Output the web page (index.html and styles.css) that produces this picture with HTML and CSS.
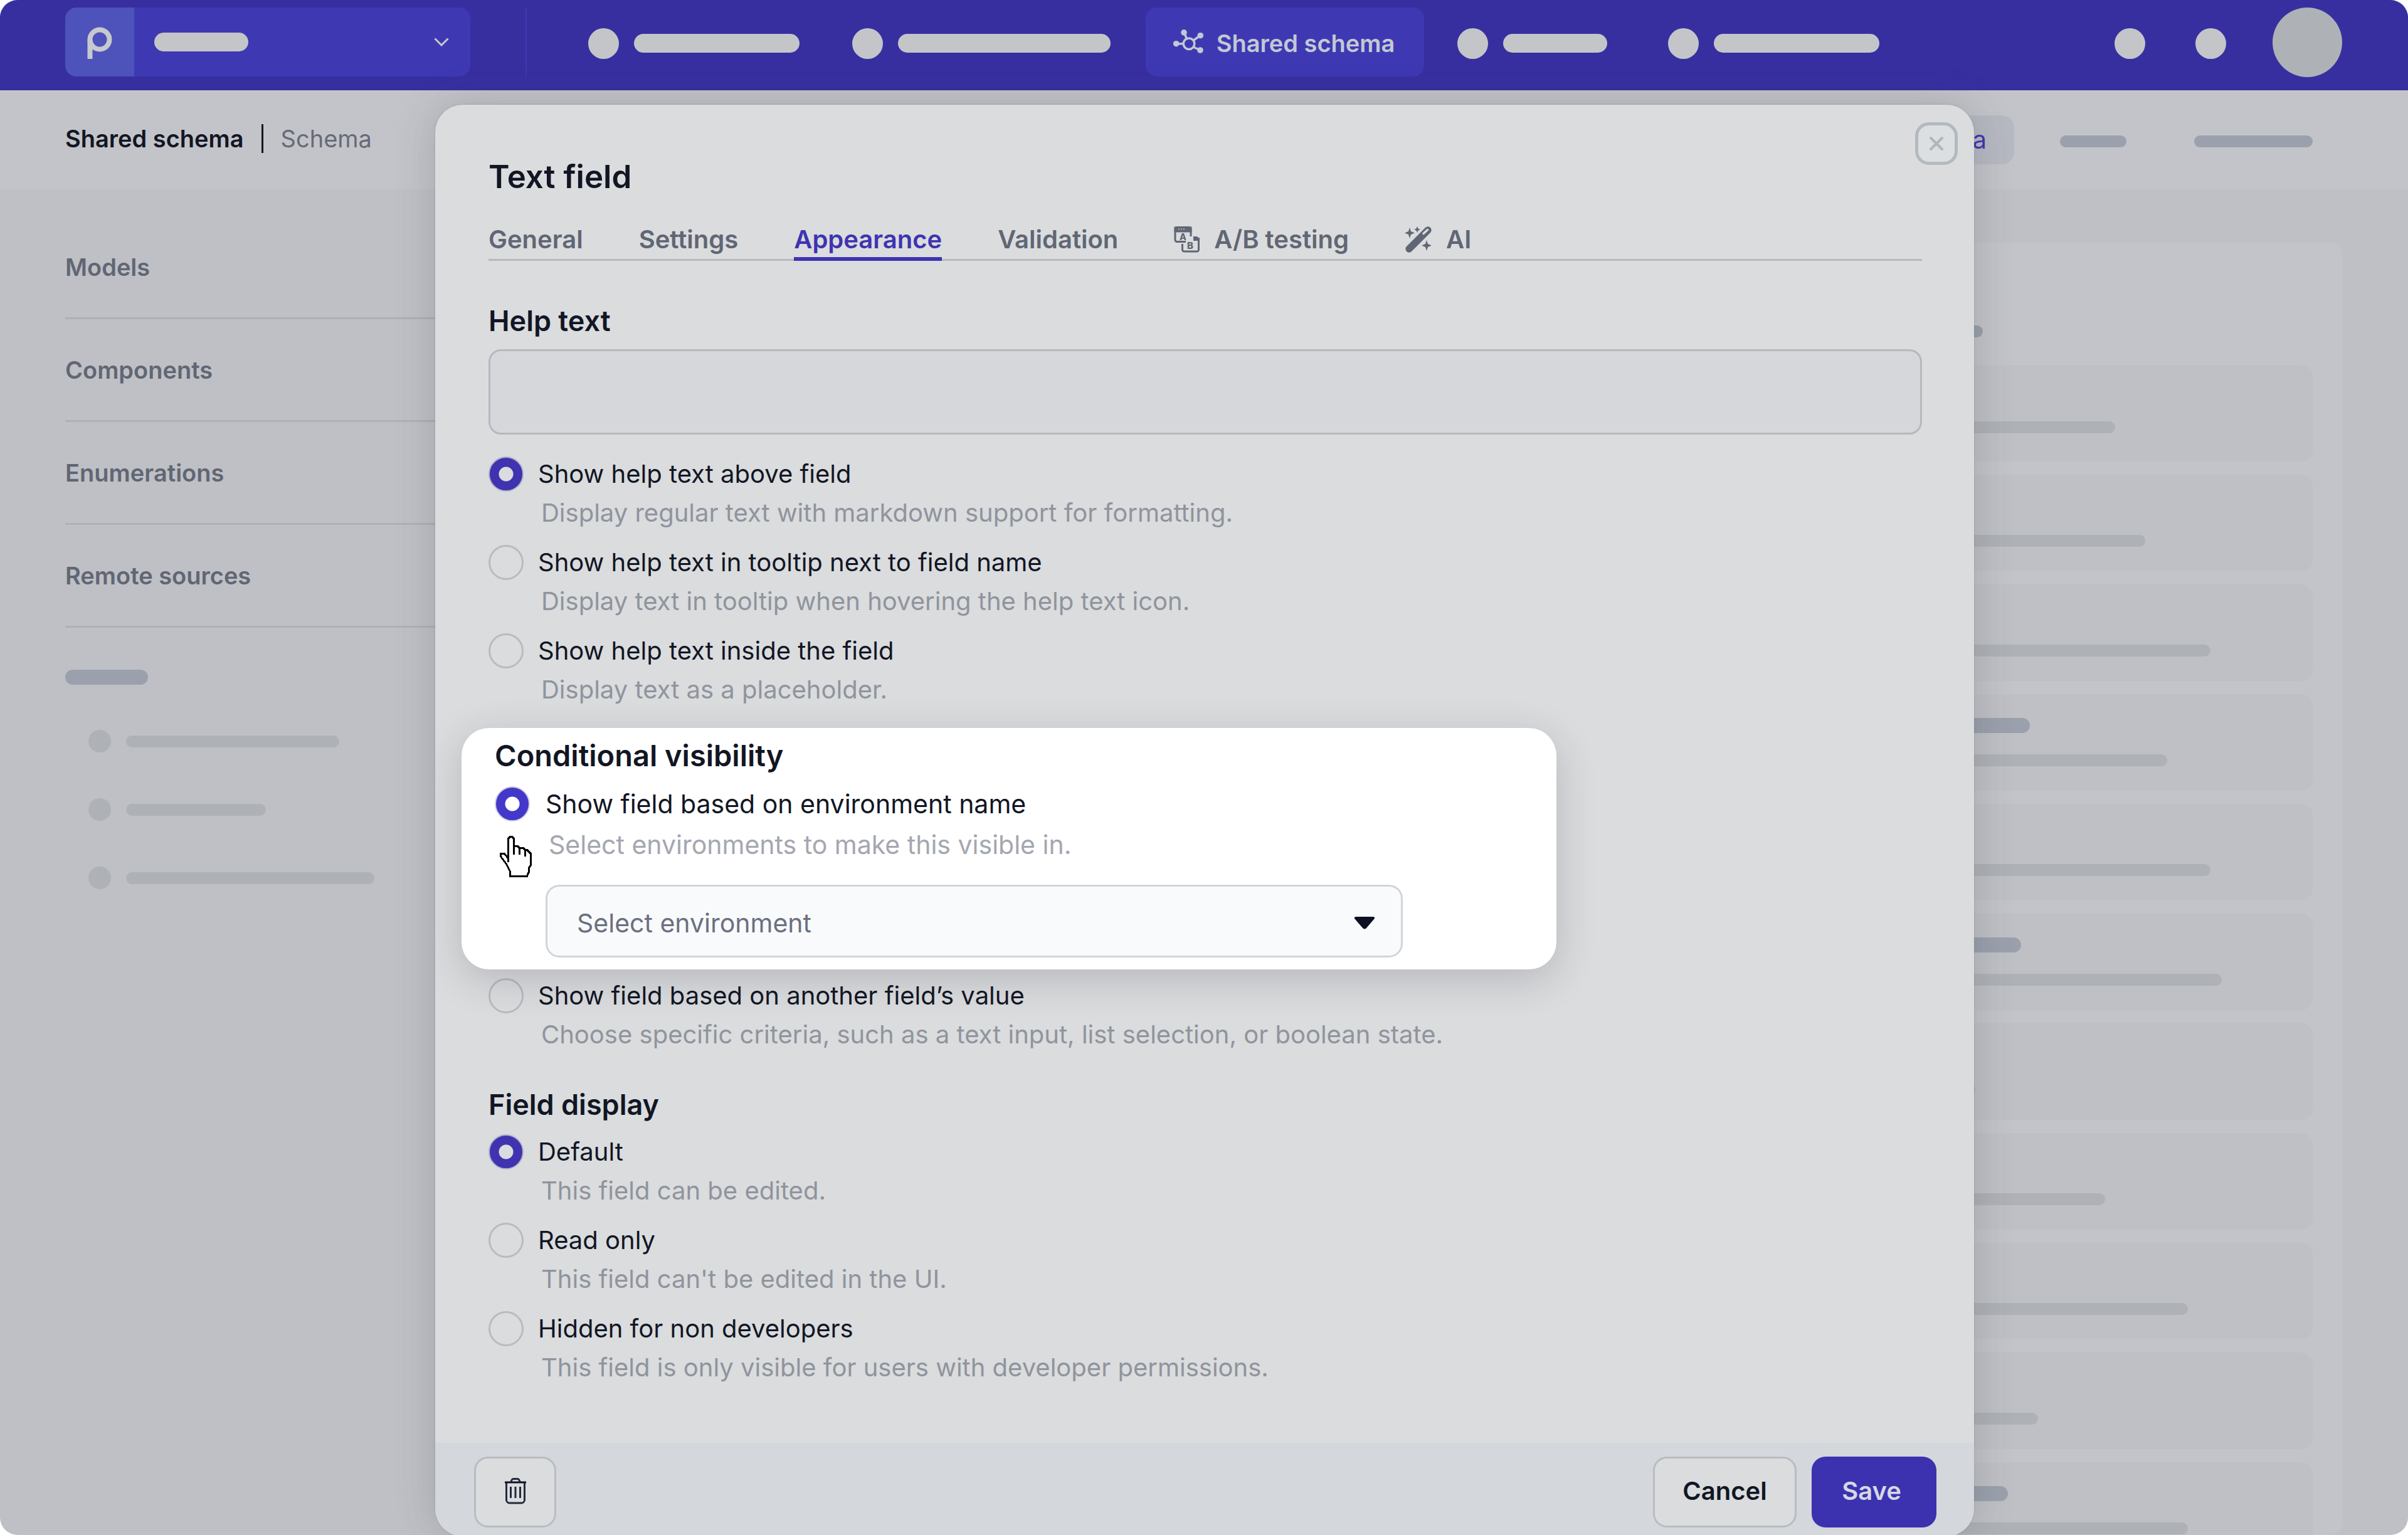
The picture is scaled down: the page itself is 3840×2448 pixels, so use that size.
FILE: index.html
```html
<!DOCTYPE html>
<html lang="en">
<head>
<meta charset="utf-8">
<title>Shared schema – Text field</title>
<link rel="stylesheet" href="styles.css">
</head>
<body>
<div class="app">
  <header class="topbar">
    <button class="switcher" type="button" aria-label="Switch project">
      <span class="switcher-logo">
        <svg width="40" height="52" viewBox="0 0 40 52" fill="none" stroke="#c6c9cd" stroke-width="8"><circle cx="20" cy="20" r="15.5"/><path d="M4.5 20V51"/></svg>
      </span>
      <span class="pill pill-light switcher-name"></span>
      <svg class="switcher-chevron" width="24" height="14" viewBox="0 0 24 14" fill="none" stroke="#c6c9cd" stroke-width="3"><path d="M1.500 1.500L12 12L22.500 1.500"/></svg>
    </button>
    <nav class="topnav" aria-label="Main">
      <span class="nav-stub"><i class="dot"></i><i class="pill pill-light" style="width:264px"></i></span>
      <span class="nav-stub"><i class="dot"></i><i class="pill pill-light" style="width:339px"></i></span>
      <a class="nav-active" href="#">
        <svg width="52" height="44" viewBox="0 0 52 44" fill="none" stroke="#c3c8d4" stroke-width="3.5"><circle cx="26" cy="22.700" r="8.800"/><path d="M6 22.700H17M18.500 5L22.500 15M33 17.500L44 9.700M33 28L44 33"/><g fill="#c3c8d4" stroke="none"><circle cx="5.700" cy="22.700" r="4.800"/><circle cx="18" cy="4.900" r="4.800"/><circle cx="44.300" cy="9.700" r="4.800"/><circle cx="44" cy="33" r="4.800"/></g></svg>
        <span>Shared schema</span>
      </a>
      <span class="nav-stub"><i class="dot"></i><i class="pill pill-light" style="width:166px"></i></span>
      <span class="nav-stub"><i class="dot"></i><i class="pill pill-light" style="width:264px"></i></span>
    </nav>
    <div class="topbar-end">
      <i class="dot"></i><i class="dot"></i><i class="avatar"></i>
    </div>
  </header>

  <div class="subbar">
    <div class="crumbs"><strong>Shared schema</strong><i class="crumb-rule"></i><span>Schema</span></div>
    <nav class="subnav" aria-label="Views">
      <a class="subnav-active" href="#">Schema</a>
      <i class="bar bar-dark" style="width:106px"></i>
      <i class="bar bar-dark" style="width:189px"></i>
    </nav>
  </div>

  <div class="workspace">
    <aside class="sidebar">
      <nav class="side-links" aria-label="Schema">
        <a href="#">Models</a>
        <a href="#">Components</a>
        <a href="#">Enumerations</a>
        <a href="#">Remote sources</a>
      </nav>
      <i class="bar bar-title side-title"></i>
      <ul class="side-list">
        <li><i class="side-dot"></i><i class="bar" style="width:340px"></i></li>
        <li><i class="side-dot"></i><i class="bar" style="width:223px"></i></li>
        <li><i class="side-dot"></i><i class="bar" style="width:396px"></i></li>
      </ul>
    </aside>
    <main class="panel">
      <i class="bar bar-dark panel-title"></i>
      <div class="cards">
        <div class="card"><i class="bar bar-title" style="width:1800px"></i><i class="bar" style="width:2485px"></i></div>
        <div class="card"><i class="bar bar-title" style="width:1900px"></i><i class="bar" style="width:2533px"></i></div>
        <div class="card"><i class="bar bar-title" style="width:1700px"></i><i class="bar" style="width:2637px"></i></div>
        <div class="card"><i class="bar bar-title" style="width:2349px"></i><i class="bar" style="width:2568px"></i></div>
        <div class="card"><i class="bar bar-title" style="width:1800px"></i><i class="bar" style="width:2637px"></i></div>
        <div class="card"><i class="bar bar-title" style="width:2335px"></i><i class="bar" style="width:2655px"></i></div>
        <div class="card"><i class="bar bar-title" style="width:1700px"></i><i class="bar" style="width:2262px"></i></div>
        <div class="card"><i class="bar bar-title" style="width:1900px"></i><i class="bar" style="width:2469px"></i></div>
        <div class="card"><i class="bar bar-title" style="width:1800px"></i><i class="bar" style="width:2601px"></i></div>
        <div class="card"><i class="bar bar-title" style="width:1700px"></i><i class="bar" style="width:2362px"></i></div>
        <div class="card"><i class="bar bar-title" style="width:2314px"></i><i class="bar" style="width:2601px"></i></div>
      </div>
    </main>
  </div>

  <div class="overlay">
    <form class="modal" role="dialog" aria-labelledby="dialog-title">
      <button class="close" type="button" aria-label="Close">
        <svg width="24" height="24" viewBox="0 0 24 24" fill="none" stroke="#b0b5bb" stroke-width="4" stroke-linecap="round"><path d="M3 3L21 21M21 3L3 21"/></svg>
      </button>
      <div class="modal-body">
        <section class="block">
          <h1 id="dialog-title">Text field</h1>
          <nav class="tabs" aria-label="Field settings">
            <a href="#">General</a>
            <a href="#">Settings</a>
            <a class="is-active" href="#" aria-current="page">Appearance</a>
            <a href="#">Validation</a>
            <a href="#">
              <svg width="42" height="42" viewBox="0 0 42 42" fill="none" stroke="#616674" stroke-width="3"><path d="M19 24.500H5A3 3 0 0 1 2 21.500V4.500A3 3 0 0 1 5 1.500H24A3 3 0 0 1 27 4.500V16"/><path d="M2 2H27V8H2Z" fill="#616674"/><path d="M7 4.500H17" stroke="#b4b7bd" stroke-width="2" stroke-dasharray="2 2"/><path d="M13.500 28V37A3 3 0 0 0 16.500 40H36.500A3 3 0 0 0 39.500 37V18"/><path d="M31 16H37L41 20V23H31Z" fill="#616674" stroke="none"/><g fill="#616674" stroke="none" font-family="Inter, sans-serif" font-weight="800"><text x="9" y="21.500" font-size="14">A</text><text x="21" y="35.500" font-size="15">B</text></g></svg>
              A/B testing
            </a>
            <a href="#">
              <svg width="44" height="42" viewBox="0 0 44 42" fill="#616674"><path d="M3 32L33 2A5.500 5.500 0 0 1 41 10L11 40A5.500 5.500 0 0 1 3 32Z"/><path d="M30 11.500L36.500 5.500" stroke="#dadcde" stroke-width="3.500" stroke-linecap="round"/><path d="M8 2L10 8L16 10.500L10 13L8 19L6 13L0 10.500L6 8ZM20 0L21.500 3.500L25 5L21.500 6.500L20 10L18.500 6.500L15 5L18.500 3.500ZM35 22L37 28L43 30.500L37 33L35 39L33 33L27 30.500L33 28Z"/></svg>
              AI
            </a>
          </nav>
        </section>

        <section class="block block-help">
          <h2><label for="help-text">Help text</label></h2>
          <input class="text-input" id="help-text" type="text">
          <div class="options">
            <div class="option">
              <input type="radio" name="help" id="help-above" checked>
              <label for="help-above">Show help text above field</label>
              <p>Display regular text with markdown support for formatting.</p>
            </div>
            <div class="option">
              <input type="radio" name="help" id="help-tip">
              <label for="help-tip">Show help text in tooltip next to field name</label>
              <p>Display text in tooltip when hovering the help text icon.</p>
            </div>
            <div class="option">
              <input type="radio" name="help" id="help-inside">
              <label for="help-inside">Show help text inside the field</label>
              <p>Display text as a placeholder.</p>
            </div>
          </div>
        </section>

        <section class="spotlight">
          <h2>Conditional visibility</h2>
          <div class="option">
            <input type="radio" name="visibility" id="vis-env" checked>
            <label for="vis-env">Show field based on environment name</label>
            <p>Select environments to make this visible in.</p>
            <div class="select-wrap">
              <select aria-label="Select environment"><option>Select environment</option></select>
              <svg width="34" height="20" viewBox="0 0 34 20" fill="#0c1020"><path d="M3 0H31Q35 1 32 4L20 18Q17 21 14 18L2 4Q-1 1 3 0Z"/></svg>
            </div>
          </div>
          <svg class="cursor" width="51" height="66" viewBox="0 0 17 22" fill="#fff" stroke="#000" shape-rendering="crispEdges"><path d="M5.500 .5H6.500L7.500 1.500V5.500H9.500L10.500 6.500H12.500L13.500 7.500H14.500L16.500 9.500V15.500L15.500 17V19L14.500 21.500H5.500V19L3.500 15L.5 11V9.500H2.500L4.500 12V1.500Z"/><path d="M7.500 5V10M10.500 6V10M13.500 7V11M4.500 10V14" fill="none"/></svg>
        </section>

        <section class="block block-visibility">
          <div class="option">
            <input type="radio" name="visibility" id="vis-field">
            <label for="vis-field">Show field based on another field’s value</label>
            <p>Choose specific criteria, such as a text input, list selection, or boolean state.</p>
          </div>
        </section>

        <section class="block block-display">
          <h2>Field display</h2>
          <div class="options">
            <div class="option">
              <input type="radio" name="display" id="display-default" checked>
              <label for="display-default">Default</label>
              <p>This field can be edited.</p>
            </div>
            <div class="option">
              <input type="radio" name="display" id="display-read">
              <label for="display-read">Read only</label>
              <p>This field can't be edited in the UI.</p>
            </div>
            <div class="option">
              <input type="radio" name="display" id="display-hidden">
              <label for="display-hidden">Hidden for non developers</label>
              <p>This field is only visible for users with developer permissions.</p>
            </div>
          </div>
        </section>
      </div>
      <footer class="modal-foot">
        <button class="btn btn-icon" type="button" aria-label="Delete field">
          <svg width="34" height="42" viewBox="0 0 34 42" fill="none" stroke="#262b3b" stroke-width="3"><path d="M2.500 7V35A5 5 0 0 0 7.500 40H26.500A5 5 0 0 0 31.500 35V7"/><path d="M0 7H34" stroke="#0f1322"/><path d="M10 6Q11 1.500 14 1.500H20Q23 1.500 24 6M9.500 14V32M17 14V32M24.500 14V32"/></svg>
        </button>
        <button class="btn btn-cancel" type="button">Cancel</button>
        <button class="btn btn-save" type="submit">Save</button>
      </footer>
    </form>
  </div>
</div>
</body>
</html>
```

FILE: styles.css
```css
* { box-sizing: border-box; }

body {
  margin: 0;
  background: #fff;
  color: #121624;
  font-family: Inter, "Liberation Sans", sans-serif;
  font-size: 40px;
  line-height: 60px;
}

a { color: inherit; text-decoration: none; }
h1, h2, p, ul { margin: 0; padding: 0; }
svg { display: block; flex: none; }
button, input, select { font: inherit; color: inherit; }

.app {
  position: relative;
  display: flex;
  flex-direction: column;
  height: 100vh;
  overflow: hidden;
  border-radius: 28px;
  background: #bec0c5;
}

/* Placeholder shapes */
.dot, .pill, .bar, .avatar, .side-dot { display: block; flex: none; }
.dot { width: 49px; height: 49px; border-radius: 50%; background: #c3c5c9; }
.pill { height: 30px; border-radius: 15px; }
.pill-light { background: #c3c5c9; }
.bar { height: 19px; border-radius: 10px; background: #aeb1b6; }
.bar-dark { background: #9aa1ac; }
.bar-title { height: 24px; border-radius: 12px; background: #9aa1ac; }

/* Top bar */
.topbar {
  display: flex;
  align-items: center;
  flex: none;
  height: 144px;
  padding: 0 105px 10px 104px;
  background: #372fa0;
}
.switcher {
  display: flex;
  align-items: center;
  width: 646px;
  height: 110px;
  padding: 0 34px 0 0;
  overflow: hidden;
  border: 0;
  border-radius: 18px;
  background: #3e39b3;
}
.switcher-logo {
  display: flex;
  align-items: center;
  justify-content: center;
  width: 110px;
  height: 110px;
  padding-top: 4px;
  background: #4e52bb;
}
.switcher-name { width: 150px; margin-left: 32px; }
.switcher-chevron { margin-left: auto; }
.topnav {
  display: flex;
  align-items: center;
  height: 110px;
  margin-left: 88px;
  padding-left: 98px;
  border-left: 2px solid #3e39b3;
}
.nav-stub { display: flex; align-items: center; gap: 24px; padding-top: 4px; }
.nav-stub + .nav-stub { margin-left: 84px; }
.nav-active {
  display: flex;
  align-items: center;
  justify-content: center;
  gap: 18px;
  width: 444px;
  height: 110px;
  margin: 0 53px 0 56px;
  padding: 4px 4px 0 0;
  border-radius: 18px;
  background: #3e39b3;
  color: #c3c8d4;
  font-size: 38px;
  font-weight: 600;
}
.nav-active + .nav-stub + .nav-stub { margin-left: 97px; }
.topbar-end { display: flex; align-items: center; gap: 80px; margin-left: auto; }
.topbar-end .dot { margin-top: 4px; }
.avatar { width: 111px; height: 111px; margin-left: -6px; border-radius: 50%; background: #aeb2b7; }

/* Breadcrumb bar */
.subbar {
  display: flex;
  align-items: center;
  justify-content: space-between;
  flex: none;
  height: 157px;
  padding: 0 152px 0 104px;
  background: #c3c4c9;
}
.crumbs { display: flex; align-items: center; gap: 28px; padding-bottom: 4px; color: #666b78; font-size: 38px; }
.crumbs strong { color: #121624; font-weight: 600; }
.crumb-rule { width: 3px; height: 46px; background: #121624; }
.subnav { display: flex; align-items: center; gap: 108px; }
.subnav .bar { margin-top: 6px; }
.subnav-active {
  margin-right: -35px;
  padding: 9px 44px 9px 46px;
  border-radius: 20px;
  background: #b6b9c1;
  color: #3f33b0;
}

/* Workspace */
.workspace { display: flex; flex: 1; min-height: 0; padding: 0 105px 0 104px; }
.sidebar { width: 640px; flex: none; padding-top: 44px; }
.side-links a {
  display: flex;
  align-items: center;
  height: 164px;
  border-bottom: 3px solid #aeb0b5;
  color: #616674;
  font-size: 38px;
  font-weight: 600;
}
.side-title { width: 132px; margin-top: 67px; }
.side-list { display: flex; flex-direction: column; gap: 73px; margin-top: 72px; padding-left: 37px; list-style: none; }
.side-list li { display: flex; align-items: center; gap: 24px; }
.side-dot { width: 36px; height: 36px; border-radius: 50%; background: #aeb1b6; }
.panel {
  flex: 1;
  min-width: 0;
  margin: 86px 0 0 56px;
  padding: 132px 47px 0 48px;
  border-radius: 20px;
  background: #c3c4c9;
}
.panel-title { width: 2314px; }
.cards { display: flex; flex-direction: column; gap: 21px; margin-top: 44px; }
.card {
  display: flex;
  flex-direction: column;
  flex: none;
  gap: 34px;
  height: 154px;
  padding: 38px 40px 0;
  border-radius: 18px;
  background: #bec0c5;
}
.card:first-child { gap: 28px; }

/* Dialog */
.overlay {
  position: absolute;
  inset: 0;
  display: flex;
  padding: 167px 692px 0 694px;
}
.modal {
  position: relative;
  display: flex;
  flex-direction: column;
  flex: 1;
  min-width: 0;
  margin-bottom: -2px;
  overflow: hidden;
  border-radius: 44px;
  background: #dadcde;
  box-shadow: 0 0 64px rgba(60, 60, 70, .22), 0 0 2px rgba(60, 60, 70, .3);
}
.close {
  position: absolute;
  top: 28px;
  right: 26px;
  display: flex;
  align-items: center;
  justify-content: center;
  width: 68px;
  height: 68px;
  padding: 0;
  border: 5px solid #b4b9bd;
  border-radius: 22px;
  background: #dcdfe2;
}
.modal-body { flex: 1; min-height: 0; padding: 83px 42px 0; }
.block { padding: 0 41px 0 43px; }

h1 { font-size: 51px; line-height: 64px; font-weight: 600; }
h2 { font-size: 45px; line-height: 60px; font-weight: 600; }

.tabs {
  display: flex;
  gap: 89px;
  margin-top: 44px;
  box-shadow: inset 0 -3px #b6b9bd;
  color: #616674;
  font-weight: 600;
}
.tabs a { display: flex; align-items: center; gap: 22px; height: 58px; padding-bottom: 10px; }
.tabs .is-active { color: #3f33b0; box-shadow: inset 0 -6px #3f33b0; }

.block-help { margin-top: 66px; }
.text-input {
  display: block;
  width: 100%;
  height: 136px;
  margin: 15px 0 31px;
  padding: 0 48px;
  border: 3px solid #b6b9bd;
  border-radius: 20px;
  background: #d5d7db;
}
.options { display: flex; flex-direction: column; gap: 17px; }
.option {
  display: grid;
  grid-template-columns: 56px 1fr;
  column-gap: 23px;
  align-items: center;
}
.option label { line-height: 64px; }
.option p { grid-column: 2; padding-left: 5px; color: #90949d; }
.option input {
  appearance: none;
  width: 56px;
  height: 56px;
  margin: 0;
  border: 3px solid #b9bbc0;
  border-radius: 50%;
}
.option input:checked {
  border: 2px solid #b3b2cc;
  background: radial-gradient(circle, #dadcde 11px, #3f33b0 12px);
}

.spotlight {
  position: relative;
  width: 1746px;
  margin: 31px 0 10px;
  padding: 14px 245px 19px 53px;
  border-radius: 44px;
  background: #fff;
  box-shadow: 0 16px 64px rgba(40, 40, 50, .2);
  font-size: 41px;
}
.spotlight h2 { margin-bottom: 14px; font-size: 47px; }
.spotlight .option label { line-height: 66px; }
.spotlight .option { column-gap: 25px; }
.spotlight .option p { margin-top: 2px; color: #a4a7b0; }
.spotlight .option input:checked { border-color: #cfcfe4; background: radial-gradient(circle, #fff 11px, #4338ca 12px); }
.select-wrap { position: relative; grid-column: 2; margin-top: 34px; }
.select-wrap select {
  display: block;
  appearance: none;
  width: 100%;
  height: 116px;
  padding: 5px 90px 0 47px;
  border: 3px solid #d1d5db;
  border-radius: 22px;
  background: #f9fafc;
  color: #6b7080;
}
.select-wrap svg { position: absolute; top: 51px; right: 44px; pointer-events: none; }
.cursor { position: absolute; top: 172px; left: 61px; }

.block-display { margin-top: 52px; }
.block-display h2 { margin-bottom: 13px; }

.modal-foot {
  display: flex;
  align-items: flex-start;
  gap: 24px;
  height: 149px;
  padding: 22px 60px 0 62px;
  background: #d4d7db;
  box-shadow: inset 0 -2px #eceef0;
}
.btn {
  display: flex;
  align-items: center;
  justify-content: center;
  height: 113px;
  padding: 0 0 4px;
  border: 3px solid #b9bcc0;
  border-radius: 22px;
  background: #dadcde;
  font-weight: 600;
}
.btn-icon { width: 131px; margin-right: auto; }
.btn-cancel { width: 229px; }
.btn-save { width: 199px; padding-right: 8px; border: 0; background: #3c32b0; color: #d6d8e4; }
```
